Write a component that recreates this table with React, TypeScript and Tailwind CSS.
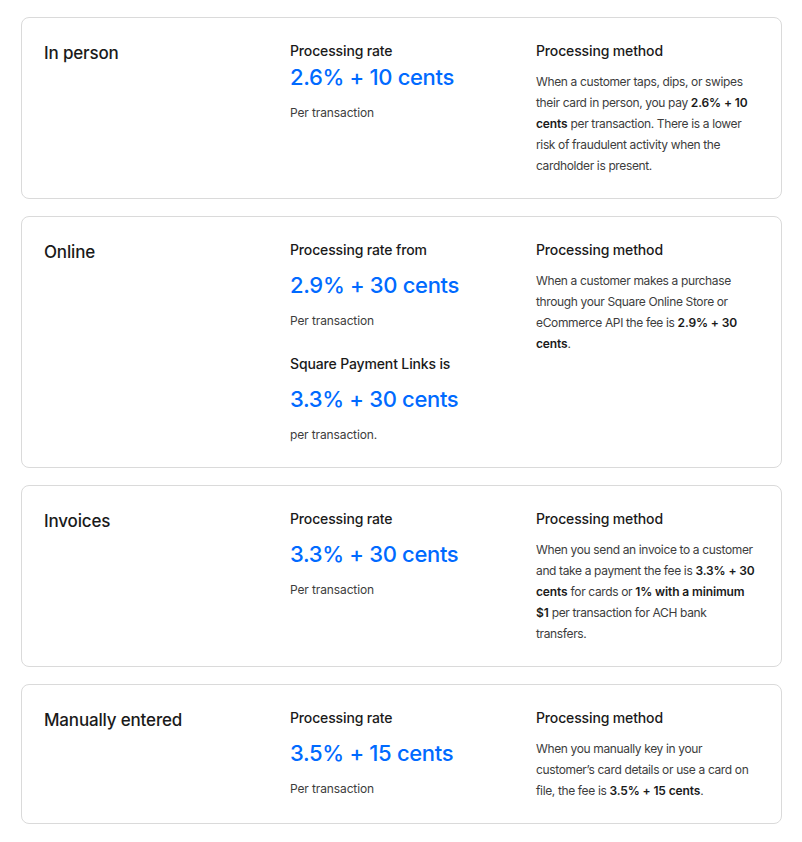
const blue = "text-[#006aff]";

type Rate = { label: string; value: string; note: string };

type Row = {
  title: string;
  rates: Rate[];
  tight?: boolean;
  method: React.ReactNode;
};

const strong = "font-semibold tracking-[-0.01em] text-[#1a1a1a]";

const rows: Row[] = [
  {
    title: "In person",
    tight: true,
    rates: [{ label: "Processing rate", value: "2.6% + 10 cents", note: "Per transaction" }],
    method: (
      <>
        When a customer taps, dips, or swipes their card in person, you pay{" "}
        <b className={strong}>2.6% + 10 cents</b> per transaction. There is a lower risk of fraudulent
        activity when the cardholder is present.
      </>
    ),
  },
  {
    title: "Online",
    rates: [
      { label: "Processing rate from", value: "2.9% + 30 cents", note: "Per transaction" },
      { label: "Square Payment Links is", value: "3.3% + 30 cents", note: "per transaction." },
    ],
    method: (
      <>
        When a customer makes a purchase through your Square Online Store or eCommerce API the fee is{" "}
        <b className={strong}>2.9% + 30 cents</b>.
      </>
    ),
  },
  {
    title: "Invoices",
    rates: [{ label: "Processing rate", value: "3.3% + 30 cents", note: "Per transaction" }],
    method: (
      <>
        When you send an invoice to a customer and take a payment the fee is{" "}
        <b className={strong}>3.3% + 30 cents</b> for cards or <b className={strong}>1% with a minimum $1</b>{" "}
        per transaction for ACH bank transfers.
      </>
    ),
  },
  {
    title: "Manually entered",
    rates: [{ label: "Processing rate", value: "3.5% + 15 cents", note: "Per transaction" }],
    method: (
      <>
        When you manually key in your customer’s card details or use a card on file, the fee is{" "}
        <b className={strong}>3.5% + 15 cents</b>.
      </>
    ),
  },
];

const RateBlock = ({ rate, tight }: { rate: Rate; tight?: boolean }) => (
  <div className="flex flex-col">
    <h4 className="text-[14px] leading-5 font-medium tracking-[-0.01em] text-[#1a1a1a]">{rate.label}</h4>
    <p className={`${blue} text-[22px] leading-7 font-medium tracking-[-0.015em] ${tight ? "mt-[2px]" : "mt-[11px]"}`}>
      {rate.value}
    </p>
    <p className="mt-3 text-[12px] leading-5 tracking-[-0.01em] text-[#3d3d3d]">{rate.note}</p>
  </div>
);

export default function App() {
  return (
    <div className="min-h-screen bg-white pt-[17px] pr-5 pb-4 pl-[21px] font-['Inter',sans-serif]">
      <div className="flex flex-col gap-[17px]">
        {rows.map((row) => (
          <section
            key={row.title}
            className="grid grid-cols-[246px_246px_1fr] rounded-lg border border-[#dadada] pt-[23px] pr-[23px] pb-[22px] pl-[22px]"
          >
            <h3 className="text-[17px] leading-6 font-medium tracking-[-0.01em] text-[#1a1a1a]">{row.title}</h3>
            <div className="flex flex-col gap-[23px]">
              {row.rates.map((rate) => (
                <RateBlock key={rate.label} rate={rate} tight={row.tight} />
              ))}
            </div>
            <div>
              <h4 className="text-[14px] leading-5 font-medium tracking-[-0.01em] text-[#1a1a1a]">
                Processing method
              </h4>
              <p className="mt-[10px] text-[12px] leading-[21px] tracking-[-0.03em] text-[#3d3d3d]">{row.method}</p>
            </div>
          </section>
        ))}
      </div>
    </div>
  );
}
